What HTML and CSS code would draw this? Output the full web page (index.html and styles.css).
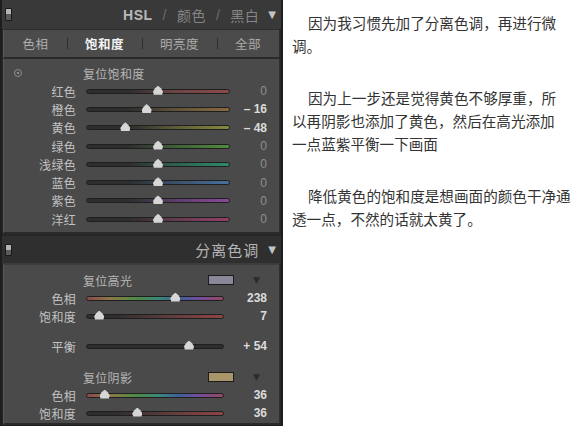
FILE: index.html
```html
<!DOCTYPE html>
<html lang="zh">
<head>
<meta charset="utf-8">
<title>HSL</title>
<link rel="stylesheet" href="styles.css">
</head>
<body>
<div class="page">
  <div class="panel">
    <div class="hdr hdr1">
      <span class="toggle"></span>
      <span class="hdr-title"><b class="hsl">HSL</b><i class="sl">/</i><span class="dimt">颜色</span><i class="sl">/</i><span class="dimt">黑白</span></span>
      <span class="tri">▼</span>
    </div>
    <div class="tabs">
      <span class="tab t1">色相</span>
      <span class="tab t2 active">饱和度</span>
      <span class="tab t3">明亮度</span>
      <span class="tab t4">全部</span>
    </div>
    <div class="sec sec1">
      <div class="reset"><span class="target"></span><span class="reset-txt">复位饱和度</span></div>
      <div class="row"><span class="lab">红色</span><span class="track t-red"><span class="thumb" style="left:50%"></span></span><span class="val dim">0</span></div>
      <div class="row"><span class="lab">橙色</span><span class="track t-orange"><span class="thumb" style="left:42%"></span></span><span class="val">– 16</span></div>
      <div class="row"><span class="lab">黄色</span><span class="track t-yellow"><span class="thumb" style="left:27%"></span></span><span class="val">– 48</span></div>
      <div class="row"><span class="lab">绿色</span><span class="track t-green"><span class="thumb" style="left:50%"></span></span><span class="val dim">0</span></div>
      <div class="row"><span class="lab">浅绿色</span><span class="track t-aqua"><span class="thumb" style="left:50%"></span></span><span class="val dim">0</span></div>
      <div class="row"><span class="lab">蓝色</span><span class="track t-blue"><span class="thumb" style="left:50%"></span></span><span class="val dim">0</span></div>
      <div class="row"><span class="lab">紫色</span><span class="track t-purple"><span class="thumb" style="left:50%"></span></span><span class="val dim">0</span></div>
      <div class="row"><span class="lab">洋红</span><span class="track t-magenta"><span class="thumb" style="left:50%"></span></span><span class="val dim">0</span></div>
    </div>
    <div class="hdr hdr2">
      <span class="toggle"></span>
      <span class="hdr-title big">分离色调</span>
      <span class="tri">▼</span>
    </div>
    <div class="sec sec2">
      <div class="reset2"><span class="reset-txt">复位高光</span><span class="swatch sw-hi"></span><span class="tri2">▼</span></div>
      <div class="row"><span class="lab">色相</span><span class="track t-hue"><span class="thumb" style="left:65%"></span></span><span class="val">238</span></div>
      <div class="row"><span class="lab">饱和度</span><span class="track t-sat"><span class="thumb" style="left:9%"></span></span><span class="val">7</span></div>
      <div class="row balance"><span class="lab">平衡</span><span class="track t-bal"><span class="thumb" style="left:75%"></span></span><span class="val">+ 54</span></div>
      <div class="reset2 shadow"><span class="reset-txt">复位阴影</span><span class="swatch sw-sh"></span><span class="tri2">▼</span></div>
      <div class="row"><span class="lab">色相</span><span class="track t-hue"><span class="thumb" style="left:13%"></span></span><span class="val">36</span></div>
      <div class="row"><span class="lab">饱和度</span><span class="track t-sat"><span class="thumb" style="left:37%"></span></span><span class="val">36</span></div>
    </div>
  </div>
  <div class="text">
    <p>因为我习惯先加了分离色调，再进行微<br>调。</p>
    <p>因为上一步还是觉得黄色不够厚重，所<br>以再阴影也添加了黄色，然后在高光添加<br>一点蓝紫平衡一下画面</p>
    <p>降低黄色的饱和度是想画面的颜色干净通<br>透一点，不然的话就太黄了。</p>
  </div>
</div>
</body>
</html>
```

FILE: styles.css
```css
* { box-sizing: border-box; }
html, body { margin: 0; padding: 0; background: #ffffff; }
body { width: 572px; height: 428px; overflow: hidden; font-family: "Noto Sans CJK SC", "Noto Sans", sans-serif; }

.page { display: flex; align-items: flex-start; }

.panel {
  flex: none;
  width: 283px;
  height: 426px;
  background: #262626;
  border-left: 2px solid #1e1e1e;
  border-right: 2px solid #1e1e1e;
  border-bottom: 1px solid #1e1e1e;
  display: flex;
  flex-direction: column;
  overflow: hidden;
}

.hdr {
  display: flex;
  align-items: center;
  padding: 0 4px 0 3px;
  background: #393939;
}
.hdr1 { height: 29px; }
.hdr2 { height: 27px; margin-top: 2px; background: #2f2f2f; }

.toggle {
  width: 7px;
  height: 13px;
  border: 1px solid #1a1a1a;
  background: linear-gradient(#b4b4b4 0, #b4b4b4 50%, #5a5a5a 50%, #5a5a5a 100%);
  border-radius: 1px;
}
.hdr2 .toggle { height: 12px; }

.hdr-title {
  margin-left: auto;
  font-size: 14px;
  color: #8a8a8a;
  display: flex;
  align-items: center;
  letter-spacing: 0.5px;
}
.hsl { font-family: "Liberation Sans", sans-serif; font-weight: bold; color: #b8b8b8; font-size: 14px; letter-spacing: 0.5px; }
.sl { font-style: normal; color: #6c6c6c; margin: 0 10px; font-family: "Liberation Sans", sans-serif; }
.dimt { color: #858585; }
.hdr-title.big { font-size: 15px; color: #b4b4b4; letter-spacing: 1px; }

.tri {
  margin-left: 9px;
  margin-right: 1px;
  font-size: 10px;
  color: #c4c4c4;
  font-family: "DejaVu Sans", sans-serif;
}

.tabs {
  height: 30px;
  margin: 0 1px;
  background: #4b4b4b;
  border-top: 1px solid #2c2c2c;
  border-left: 1px solid #5a5a5a;
  border-right: 1px solid #2c2c2c;
  border-bottom: 2px solid #2a2a2a;
  display: flex;
  align-items: stretch;
}
.tab {
  display: flex;
  align-items: center;
  justify-content: center;
  font-size: 12.5px;
  color: #ababab;
  letter-spacing: 0.5px;
}
.tab + .tab {
  background: linear-gradient(#2e2e2e, #2e2e2e) left center / 1px 11px no-repeat;
}
.t1 { width: 63px; }
.t2 { width: 75px; }
.t3 { width: 75px; }
.t4 { flex: 1; }
.tab.active { color: #f2f2f2; font-weight: bold; }

.sec {
  margin: 0 1px;
  background: #4a4a4a;
  border-left: 1px solid #575757;
  border-right: 1px solid #2e2e2e;
  border-bottom: 2px solid #2a2a2a;
}
.sec1 { height: 175px; padding-top: 5px; }
.sec2 { flex: 1; padding-top: 6px; border-top: 2px solid #3c3c3c; }

.reset {
  height: 18px;
  display: flex;
  align-items: center;
}
.target {
  width: 8px;
  height: 8px;
  margin-left: 10px;
  border: 1px solid #8c8c8c;
  border-radius: 50%;
  background: radial-gradient(circle, #8c8c8c 0, #8c8c8c 1.2px, transparent 1.6px);
}
.reset-txt {
  font-size: 12px;
  color: #b6b6b6;
  letter-spacing: 0.3px;
}
.reset .reset-txt { margin-left: 61px; }

.row {
  height: 18.3px;
  display: grid;
  grid-template-columns: 82px 144px 1fr;
  align-items: center;
}
.sec2 .row { height: 18px; grid-template-columns: 82px 138px 1fr; }
.sec2 .row.balance { margin-top: 12px; }

.lab {
  padding-right: 10px;
  text-align: right;
  font-size: 12px;
  color: #c2c2c2;
  letter-spacing: 0.3px;
}
.track {
  position: relative;
  height: 5px;
  border: 1px solid #1f1f1f;
  border-radius: 3px;
  background: #333;
}
.thumb {
  position: absolute;
  top: -4px;
  width: 10px;
  height: 9px;
  transform: translateX(-50%);
  background: #d6d6d6;
  clip-path: polygon(50% 0, 80% 30%, 100% 65%, 92% 100%, 8% 100%, 0 65%, 20% 30%);
}
.val {
  text-align: right;
  padding-right: 12px;
  font-family: "Liberation Sans", sans-serif;
  font-size: 12px;
  font-weight: bold;
  color: #dcdcdc;
}
.val.dim { color: #8e8e8e; font-weight: normal; }

.t-red { background: linear-gradient(to right, #2e2e2e 30%, #6a4444 60%, #8c4a4a); }
.t-orange { background: linear-gradient(to right, #2e2e2e 30%, #5e5038 60%, #8a6a3e); }
.t-yellow { background: linear-gradient(to right, #2e2e2e 30%, #5a5a36 60%, #868a3e); }
.t-green { background: linear-gradient(to right, #2e2e2e 30%, #3e5e36 60%, #508c3e); }
.t-aqua { background: linear-gradient(to right, #2e2e2e 30%, #2e5e4e 60%, #2e8a6a); }
.t-blue { background: linear-gradient(to right, #2e2e2e 30%, #3a4e66 60%, #46709c); }
.t-purple { background: linear-gradient(to right, #2e2e2e 30%, #583e66 60%, #8a4a98); }
.t-magenta { background: linear-gradient(to right, #2e2e2e 30%, #603a50 60%, #943e66); }
.t-hue { background: linear-gradient(to right, #8a4a4a, #8a7a44 18%, #4e8a44 36%, #3a8a7a 52%, #3e5e9a 68%, #7a4a9a 84%, #944a5e); }
.t-sat { background: linear-gradient(to right, #2e2e2e 20%, #5e3c3c 60%, #8e4444); }
.t-bal { background: #2e2e2e; }

.reset2 {
  height: 18px;
  display: flex;
  align-items: center;
  padding-left: 79px;
}
.reset2.shadow { margin-top: 13px; }
.swatch {
  margin-left: auto;
  width: 26px;
  height: 10px;
  border: 1px solid #1c1c1c;
}
.sw-hi { background: #8a8898; }
.sw-sh { background: #a8966a; }
.tri2 {
  width: 45px;
  text-align: center;
  font-size: 9px;
  color: #2c2c2c;
  font-family: "DejaVu Sans", sans-serif;
}

.text {
  flex: 1;
  padding: 11px 0 0 9px;
  color: #333333;
  font-size: 14.6px;
  line-height: 23px;
  white-space: nowrap;
}
.text p {
  margin: 0 0 29px;
  text-indent: 16px;
}
```
